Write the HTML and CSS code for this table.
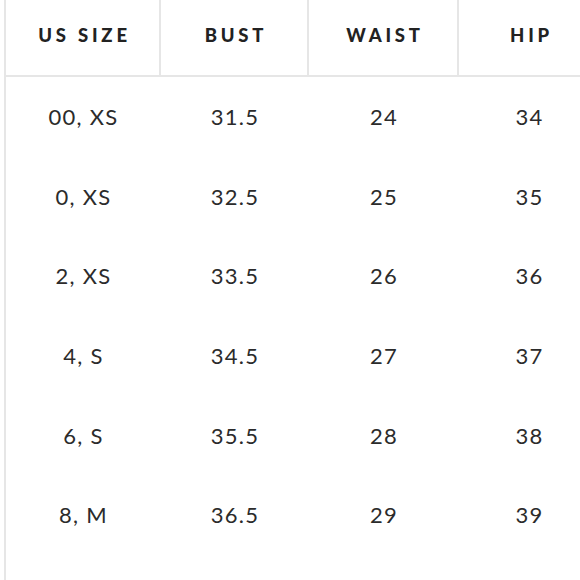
FILE: index.html
```html
<!DOCTYPE html>
<html>
<head>
<meta charset="utf-8">
<link rel="stylesheet" href="styles.css">
</head>
<body>
<div class="chart">
  <div class="head">
    <div class="hcell">US SIZE</div>
    <div class="hcell">BUST</div>
    <div class="hcell">WAIST</div>
    <div class="hcell last">HIP</div>
  </div>
  <div class="row"><div class="cell">00, XS</div><div class="cell">31.5</div><div class="cell">24</div><div class="cell">34</div></div>
  <div class="row"><div class="cell">0, XS</div><div class="cell">32.5</div><div class="cell">25</div><div class="cell">35</div></div>
  <div class="row"><div class="cell">2, XS</div><div class="cell">33.5</div><div class="cell">26</div><div class="cell">36</div></div>
  <div class="row"><div class="cell">4, S</div><div class="cell">34.5</div><div class="cell">27</div><div class="cell">37</div></div>
  <div class="row"><div class="cell">6, S</div><div class="cell">35.5</div><div class="cell">28</div><div class="cell">38</div></div>
  <div class="row"><div class="cell">8, M</div><div class="cell">36.5</div><div class="cell">29</div><div class="cell">39</div></div>
</div>
</body>
</html>
```
FILE: styles.css
```css
html, body {
  margin: 0;
  padding: 0;
  background: #fff;
  overflow: hidden;
}
body {
  width: 580px;
  height: 580px;
}
.chart {
  margin-left: 4px;
  width: 596px;
  height: 600px;
  border-left: 2px solid #e6e6e6;
  box-sizing: border-box;
}
.head, .row {
  display: grid;
  grid-template-columns: 155px 148px 150px 141px;
}
.head {
  height: 77px;
  border-bottom: 2px solid #e6e6e6;
  box-sizing: border-box;
}
.hcell {
  display: flex;
  align-items: center;
  justify-content: center;
  border-right: 2px solid #e6e6e6;
  font-family: "Lato", sans-serif;
  font-weight: 900;
  font-size: 18.5px;
  letter-spacing: 3.8px;
  color: #222;
  padding-left: 4px;
  padding-bottom: 6px;
}
.hcell.last {
  border-right: none;
}
.row {
  height: 79.6px;
}
.cell {
  display: flex;
  align-items: center;
  justify-content: center;
  font-family: "Lato", sans-serif;
  font-size: 22px;
  color: #2b2b2b;
  letter-spacing: 1.3px;
}
```
